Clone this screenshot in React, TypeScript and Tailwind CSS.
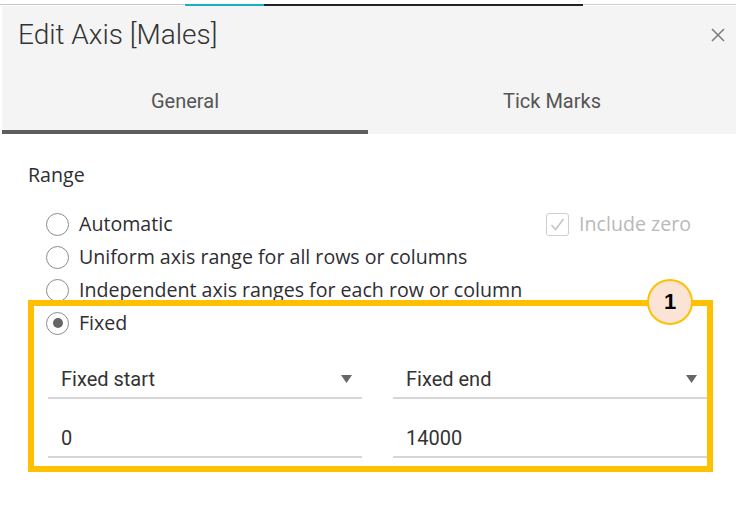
import React from "react";

const body = { fontFamily: "'Open Sans', Lato, sans-serif" };
const narrow = { fontFamily: "Roboto, 'Liberation Sans', sans-serif" };

function Radio({ checked = false }: { checked?: boolean }) {
  return (
    <span className="flex h-[23px] w-[23px] shrink-0 items-center justify-center rounded-full border-[1.5px] border-[#8c8c8c] bg-white">
      {checked && <span className="h-[10px] w-[10px] rounded-full bg-[#666]" />}
    </span>
  );
}

function RadioRow({ label, checked, children }: { label: string; checked?: boolean; children?: React.ReactNode }) {
  return (
    <div className="flex h-[22px] items-center pl-[18px]">
      <Radio checked={checked} />
      <span className="ml-[10px] text-[19.6px] leading-[22px] text-[#2e2e33]">{label}</span>
      {children}
    </div>
  );
}

function Field({ label, arrow }: { label: string; arrow?: boolean }) {
  return (
    <div className="flex items-center justify-between border-b-2 border-[#d6d6d6] pb-[6px] pl-[13px] pr-[10px]" style={narrow}>
      <span className="text-[20px] leading-[24px] text-[#333]">{label}</span>
      {arrow && (
        <svg width="11" height="8" viewBox="0 0 11 8">
          <path d="M0 0 L11 0 L5.5 8 Z" fill="#666" />
        </svg>
      )}
    </div>
  );
}

export default function App() {
  return (
    <div className="h-[516px] w-[736px] overflow-hidden bg-white" style={body}>
      {/* top strip */}
      <div className="flex h-[6px] items-end">
        <div className="flex w-full items-start">
          <div className="h-px w-[185px] bg-[#c8c8c8]" />
          <div className="h-[2px] w-[79px] bg-[#16b1c2]" />
          <div className="h-[2px] w-[319px] bg-[#222]" />
          <div className="h-px flex-1 bg-[#d0d0d0]" />
        </div>
      </div>

      {/* header */}
      <div className="ml-[2px] bg-[#f4f4f4]">
        <div className="flex items-start justify-between pl-[16px] pr-[11px] pt-[11px]">
          <h1 className="text-[28px] font-light leading-[36px] text-[#333]" style={narrow}>
            Edit Axis [Males]
          </h1>
          <svg className="mt-[11px]" width="14" height="14" viewBox="0 0 14 14">
            <path d="M1 1 L13 13 M13 1 L1 13" stroke="#7a7a7a" strokeWidth="1.5" />
          </svg>
        </div>
        <div className="flex" style={narrow}>
          <div className="flex h-[81px] w-[366px] flex-col border-b-4 border-[#5e5e5e] pt-[36px] text-center">
            <span className="text-[20px] leading-[24px] text-[#555]">General</span>
          </div>
          <div className="flex h-[81px] flex-1 flex-col pt-[36px] text-center">
            <span className="text-[20px] leading-[24px] text-[#555]">Tick Marks</span>
          </div>
        </div>
      </div>

      {/* body */}
      <div className="pl-[28px] pr-[45px] pt-[29px]">
        <div className="text-[19.6px] leading-[24px] text-[#2e2e33]">Range</div>
        <div className="mt-[26px] flex flex-col gap-[11px]">
          <RadioRow label="Automatic">
            <div className="ml-auto flex items-center">
              <span className="flex h-[23px] w-[23px] items-center justify-center rounded-[3px] border-[1.5px] border-[#cfcfcf]">
                <svg width="15" height="13" viewBox="0 0 15 13">
                  <path d="M1.5 7 L5.5 11.5 L13.5 1" fill="none" stroke="#c4c4c4" strokeWidth="1.6" />
                </svg>
              </span>
              <span className="ml-[10px] text-[19.6px] leading-[22px] text-[#b9b9b9]">Include zero</span>
            </div>
          </RadioRow>
          <RadioRow label="Uniform axis range for all rows or columns" />
          <RadioRow label="Independent axis ranges for each row or column" />
        </div>

        <div className="relative -mt-px w-[685px] border-[6px] border-[#ffc000] pb-[8px] pt-[6px]">
          <div className="-ml-[6px]">
            <RadioRow label="Fixed" checked />
          </div>
          <div className="mt-[33px] grid grid-cols-[314px_1fr] gap-x-[31px] pl-[14px]">
            <Field label="Fixed start" arrow />
            <Field label="Fixed end" arrow />
            <div className="mt-[27px]">
              <Field label="0" />
            </div>
            <div className="mt-[27px]">
              <Field label="14000" />
            </div>
          </div>

          <div className="absolute left-[613px] top-[-27px] flex h-[46px] w-[46px] items-center justify-center rounded-full border-2 border-[#ffc000] bg-[#fbe4d6]">
            <span className="text-[22px] font-bold leading-none text-black" style={{ fontFamily: "'Liberation Sans', Arial, sans-serif" }}>
              1
            </span>
          </div>
        </div>
      </div>
    </div>
  );
}
